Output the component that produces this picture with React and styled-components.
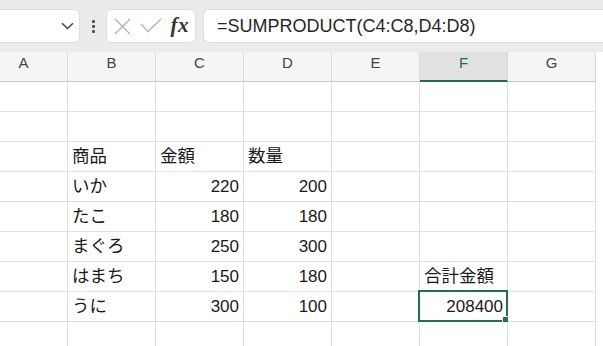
import React from "react";
import styled, { createGlobalStyle } from "styled-components";

const Global = createGlobalStyle`
  html, body { margin: 0; padding: 0; background: #fff; }
  body {
    font-family: "Liberation Sans", "Noto Sans CJK JP", sans-serif;
    overflow: hidden;
    width: 603px;
    height: 346px;
  }
`;

const Page = styled.div`
  width: 603px;
  height: 346px;
  overflow: hidden;
  display: flex;
  flex-direction: column;
`;

const Toolbar = styled.div`
  height: 52px;
  box-sizing: border-box;
  background: #ebebeb;
  padding: 9px 0;
  display: flex;
  align-items: stretch;
  flex-shrink: 0;
`;

const Box = styled.div`
  background: #fff;
  border: 1px solid #dedede;
  border-radius: 6px;
  box-sizing: border-box;
  display: flex;
  align-items: center;
`;

const NameBox = styled(Box)`
  width: 80px;
  border-left: none;
  border-top-left-radius: 0;
  border-bottom-left-radius: 0;
  justify-content: flex-end;
  padding-right: 5px;
`;

const Dots = styled.div`
  width: 26px;
  display: flex;
  flex-direction: column;
  align-items: center;
  justify-content: center;
  gap: 2px;
`;

const Dot = styled.span`
  width: 3px;
  height: 3px;
  border-radius: 1px;
  background: #505050;
`;

const FuncBox = styled(Box)`
  width: 90px;
  padding: 0 6px 0 7px;
  justify-content: space-between;
`;

const Fx = styled.span`
  font-family: "Liberation Serif", "DejaVu Serif", serif;
  font-style: italic;
  font-weight: 700;
  font-size: 21px;
  color: #333;
  margin-top: -2px;
  letter-spacing: 0.5px;
`;

const FormulaBox = styled(Box)`
  flex: 1;
  margin-left: 7px;
  border-right: none;
  border-top-right-radius: 0;
  border-bottom-right-radius: 0;
  padding-left: 13px;
  font-size: 18px;
  color: #262626;
  white-space: nowrap;
`;

const Sheet = styled.div`
  display: grid;
  grid-template-columns: repeat(7, 88px);
  grid-auto-rows: 30px;
  margin-left: -20px;
`;

const HeaderCell = styled.div`
  box-sizing: border-box;
  background: ${(p) => (p.$active ? "#e1e1e1" : "#f5f5f5")};
  border-right: 1px solid #dadada;
  border-bottom: ${(p) => (p.$active ? "2px solid #1e6e42" : "1px solid #c6c6c6")};
  color: ${(p) => (p.$active ? "#1e6e42" : "#444")};
  font-size: 15px;
  line-height: 22px;
  text-align: center;
`;

const Cell = styled.div`
  position: relative;
  box-sizing: border-box;
  border-right: 1px solid #e1e1e1;
  border-bottom: 1px solid #e1e1e1;
  padding: 0 4px;
  font-size: ${(p) => (p.$num ? "17px" : "17.5px")};
  line-height: 29px;
  text-align: ${(p) => (p.$num ? "right" : "left")};
  color: #1a1a1a;
  white-space: nowrap;
`;

const Selection = styled.div`
  position: absolute;
  top: -2px;
  left: -2px;
  right: -1px;
  bottom: -1px;
  border: 2px solid #217346;
  pointer-events: none;
`;

const FillHandle = styled.div`
  position: absolute;
  right: -3px;
  bottom: -3px;
  width: 5px;
  height: 5px;
  background: #217346;
  border: 1px solid #fff;
`;

const cols = ["A", "B", "C", "D", "E", "F", "G"];

const rows = [
  {},
  {},
  { B: "商品", C: "金額", D: "数量" },
  { B: "いか", C: 220, D: 200 },
  { B: "たこ", C: 180, D: 180 },
  { B: "まぐろ", C: 250, D: 300 },
  { B: "はまち", C: 150, D: 180, F: "合計金額" },
  { B: "うに", C: 300, D: 100, F: 208400 },
  {},
];

const active = { col: "F", row: 7 };

function ChevronIcon() {
  return (
    <svg width="13" height="8" viewBox="0 0 13 8">
      <path d="M1 1.2 L6.5 6.5 L12 1.2" fill="none" stroke="#444" strokeWidth="1.5" />
    </svg>
  );
}

function CrossIcon() {
  return (
    <svg width="17" height="17" viewBox="0 0 17 17">
      <path d="M1 1 L16 16 M16 1 L1 16" fill="none" stroke="#b4b4b4" strokeWidth="1.4" />
    </svg>
  );
}

function CheckIcon() {
  return (
    <svg width="22" height="16" viewBox="0 0 22 16">
      <path d="M1 6 L8 13.5 L21 1" fill="none" stroke="#b4b4b4" strokeWidth="1.4" />
    </svg>
  );
}

export default function App() {
  return (
    <Page>
      <Global />
      <Toolbar>
        <NameBox>
          <ChevronIcon />
        </NameBox>
        <Dots>
          <Dot />
          <Dot />
          <Dot />
        </Dots>
        <FuncBox>
          <CrossIcon />
          <CheckIcon />
          <Fx>fx</Fx>
        </FuncBox>
        <FormulaBox>=SUMPRODUCT(C4:C8,D4:D8)</FormulaBox>
      </Toolbar>
      <Sheet>
        {cols.map((c) => (
          <HeaderCell key={c} $active={c === active.col}>
            {c}
          </HeaderCell>
        ))}
        {rows.map((r, ri) =>
          cols.map((c) => {
            const v = r[c];
            const isSel = c === active.col && ri === active.row;
            return (
              <Cell key={c + ri} $num={typeof v === "number"}>
                {v}
                {isSel && (
                  <Selection>
                    <FillHandle />
                  </Selection>
                )}
              </Cell>
            );
          })
        )}
      </Sheet>
    </Page>
  );
}
